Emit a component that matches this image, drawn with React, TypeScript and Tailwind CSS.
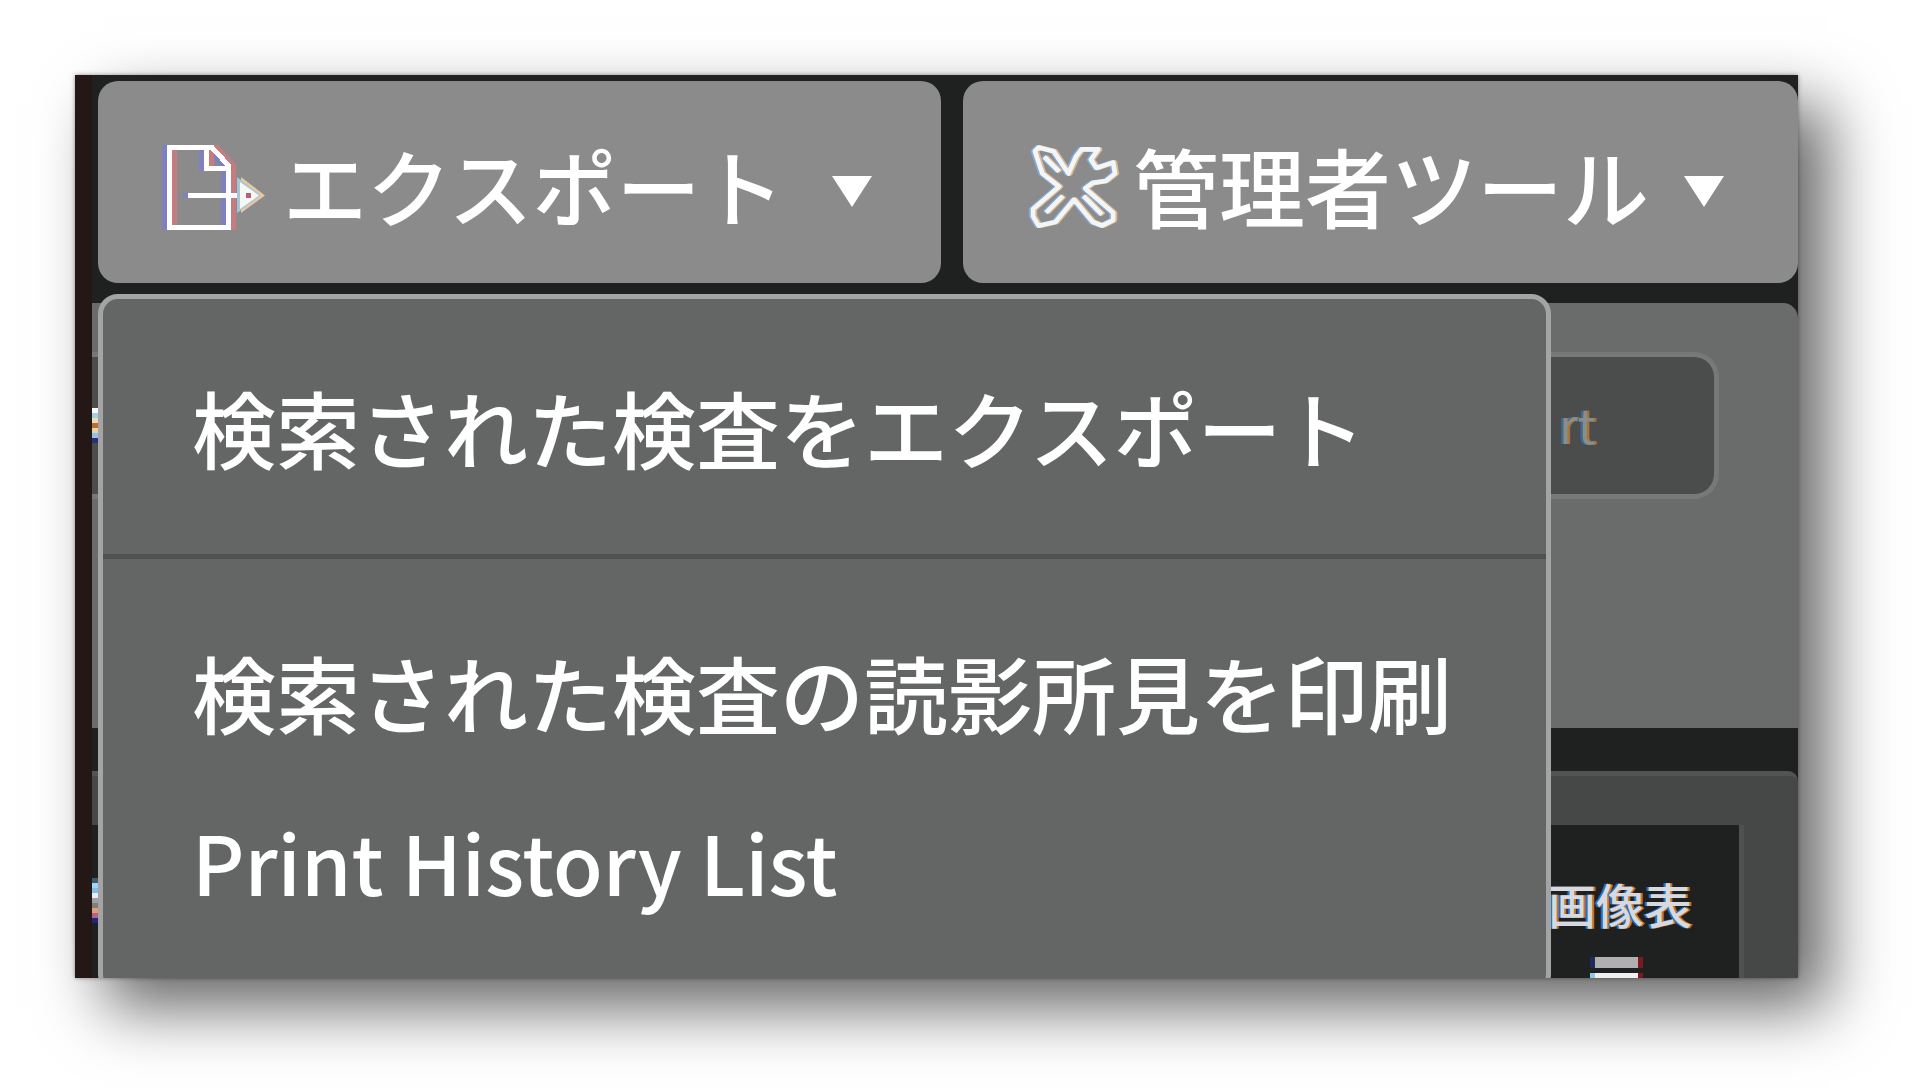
import type { ReactNode } from 'react';

const CJK = "font-['Noto_Sans_CJK_JP','Noto_Sans',sans-serif]";

const docPath = 'M2.5 2.5H45L61 20V82.5H2.5Z M39.5 2.5V23.5H61 M21 50.5H78';
const arrowHead = 'M72 32 96 50.5 72 68Z';

function DocIcon() {
  return (
    <svg width="106" height="86" viewBox="0 0 106 86" fill="none" className="shrink-0 overflow-visible">
      <g strokeWidth="5" shapeRendering="crispEdges">
        <path d={docPath} stroke="#7f80c2" transform="translate(-5 0)" />
        <path d={docPath} stroke="#c47c80" transform="translate(5 0)" />
        <path d={docPath} stroke="#ffffff" />
      </g>
      <path d={arrowHead} fill="#e6c8a0" transform="translate(2 0)" />
      <path d={arrowHead} fill="#a8c4d8" transform="translate(-2 0)" />
      <path d="M73 37 92 50.5 73 64Z" fill="#f6f8f4" />
      <path d="M79 48h5v5h-5z" fill="#b8607a" />
    </svg>
  );
}

const toolsOutline =
  'M2 4 6 0 22 4 38 28 46 10 52 2 70 2 62 13 68 22 86 16 88 28 78 36 64 38 56 44 86 70 86 78 74 84 64 80 44 56 24 80 6 84 0 74 0 66 28 42 10 28Z M14 70 32 52 M74 72 54 52 M12 10 28 26';

function ToolsIcon() {
  return (
    <svg width="82" height="81" viewBox="0 0 88 86" fill="none" className="shrink-0 overflow-visible">
      <g strokeWidth="5" strokeLinejoin="round">
        <path d={toolsOutline} stroke="#84a8d8" transform="translate(-2 0)" />
        <path d={toolsOutline} stroke="#dcb890" transform="translate(2 0)" />
        <path d={toolsOutline} stroke="#f2f6f8" />
      </g>
    </svg>
  );
}

function Caret({ className }: { className?: string }) {
  return <div className={`shrink-0 w-0 h-0 border-l-[20px] border-r-[20px] border-t-[31px] border-l-transparent border-r-transparent border-t-white ${className}`} />;
}

// clipped text showing at the edge of the menu
function PixelBits({ colors }: { colors: string[] }) {
  return (
    <div className="flex flex-col w-[6px]">
      {colors.map((c, i) => (
        <div key={i} className="h-[5px]" style={{ background: c }} />
      ))}
    </div>
  );
}

function MenuItem({ children, className }: { children: ReactNode; className?: string }) {
  return <div className={`pl-[89px] font-medium leading-[100px] text-white whitespace-nowrap ${className}`}>{children}</div>;
}

export default function App() {
  return (
    <div className={`h-[1088px] bg-white pl-[75px] pt-[75px] overflow-hidden ${CJK}`}>
      <div className="relative w-[1723px] h-[903px] overflow-hidden border-l-[17px] border-[#231815] bg-[#1e2120] shadow-[30px_30px_60px_rgba(0,0,0,0.6),0_0_4px_rgba(60,40,40,0.5)]">
        {/* top buttons */}
        <div className="flex gap-[22px] pl-[6px] pt-[6px]">
          <div className="w-[843px] h-[202px] rounded-[20px] bg-[#8a8b8a] flex items-center pl-[69px] text-white text-[84px] font-medium">
            <div className="mt-[12px]">
              <DocIcon />
            </div>
            <span className="mt-[6px] ml-[10px] w-[549px] leading-none">エクスポート</span>
            <Caret className="mt-[18px]" />
          </div>
          <div className="flex-1 h-[202px] rounded-[20px] bg-[#8a8b8a] flex items-center pl-[70px] text-white text-[86px] font-medium">
            <div className="mt-[10px]">
              <ToolsIcon />
            </div>
            <span className="mt-[6px] ml-[18px] w-[551px] leading-none">管理者ツール</span>
            <Caret className="mt-[18px]" />
          </div>
        </div>

        {/* panels behind the dropdown */}
        <div className="mt-[20px] h-[425px] rounded-tr-[15px] bg-[#6a6c6b] pt-[49px]">
          <div className="relative w-[1627px] h-[147px] rounded-r-[25px] border-[5px] border-l-0 border-[#777978] bg-[#4b4c4c]">
            <div className="absolute left-0 top-[51px]">
              <PixelBits colors={['#fafafc', '#a0d0ec', '#ecdcb4', '#bc6c34', '#ecd4a0', '#8cc4ec', '#2c2f74']} />
            </div>
            <span className="absolute left-[1467px] top-[42px] text-[48px] leading-none text-[#8c8c88] [text-shadow:-2px_0_#3f6a96,2px_0_#a87838]">rt</span>
          </div>
        </div>
        <div className="mt-[43px] h-[300px] rounded-tr-[10px] bg-[#464747] border-t-[5px] border-[#525353] pt-[49px]">
          <div className="relative w-[1652px] h-[200px] border-r-[5px] border-[#4f5050] bg-[#1f2120]">
            <span className="absolute left-[1456px] top-[54px] text-[48px] font-medium leading-none text-[#d8d8e0] whitespace-nowrap [text-shadow:-2px_0_#2a6fb0,2px_0_#c0782a]">画像表</span>
            <span className="absolute left-[1498px] top-[132px] w-[53px] h-[11px] border-l-[5px] border-r-[5px] border-l-[#1c2a60] border-r-[#7c1820] bg-[#b2afb2]" />
            <span className="absolute left-[1498px] top-[148px] w-[53px] h-[5px] border-l-[5px] border-r-[5px] border-l-[#90c8e8] border-r-[#7c1820] bg-[#f0f0f4]" />
            <div className="absolute left-0 top-[53px]">
              <PixelBits colors={['#3c5c70', '#a8d0f0', '#84bce8', '#e8ecf4', '#a0a0a4', '#807f78', '#dca078', '#b46480', '#24247c']} />
            </div>
            <div className="absolute left-0 bottom-0">
              <PixelBits colors={['#3c1018', '#b4d4f0', '#a8d4ec', '#a0d0e8']} />
            </div>
          </div>
        </div>

        {/* dropdown menu */}
        <div className="absolute left-[6px] top-[219px] w-[1453px] h-[700px] rounded-[20px] border-[5px] border-[#a3a4a3] bg-[#646665] pt-[78px]">
          <MenuItem className="text-[84px]">検索された検査をエクスポート</MenuItem>
          <div className="mt-[77px] h-[5px] bg-[#505251]" />
          <MenuItem className="mt-[83px] text-[84px]">検索された検査の読影所見を印刷</MenuItem>
          <MenuItem className="mt-[69px] text-[81px]">Print History List</MenuItem>
        </div>
      </div>
    </div>
  );
}
